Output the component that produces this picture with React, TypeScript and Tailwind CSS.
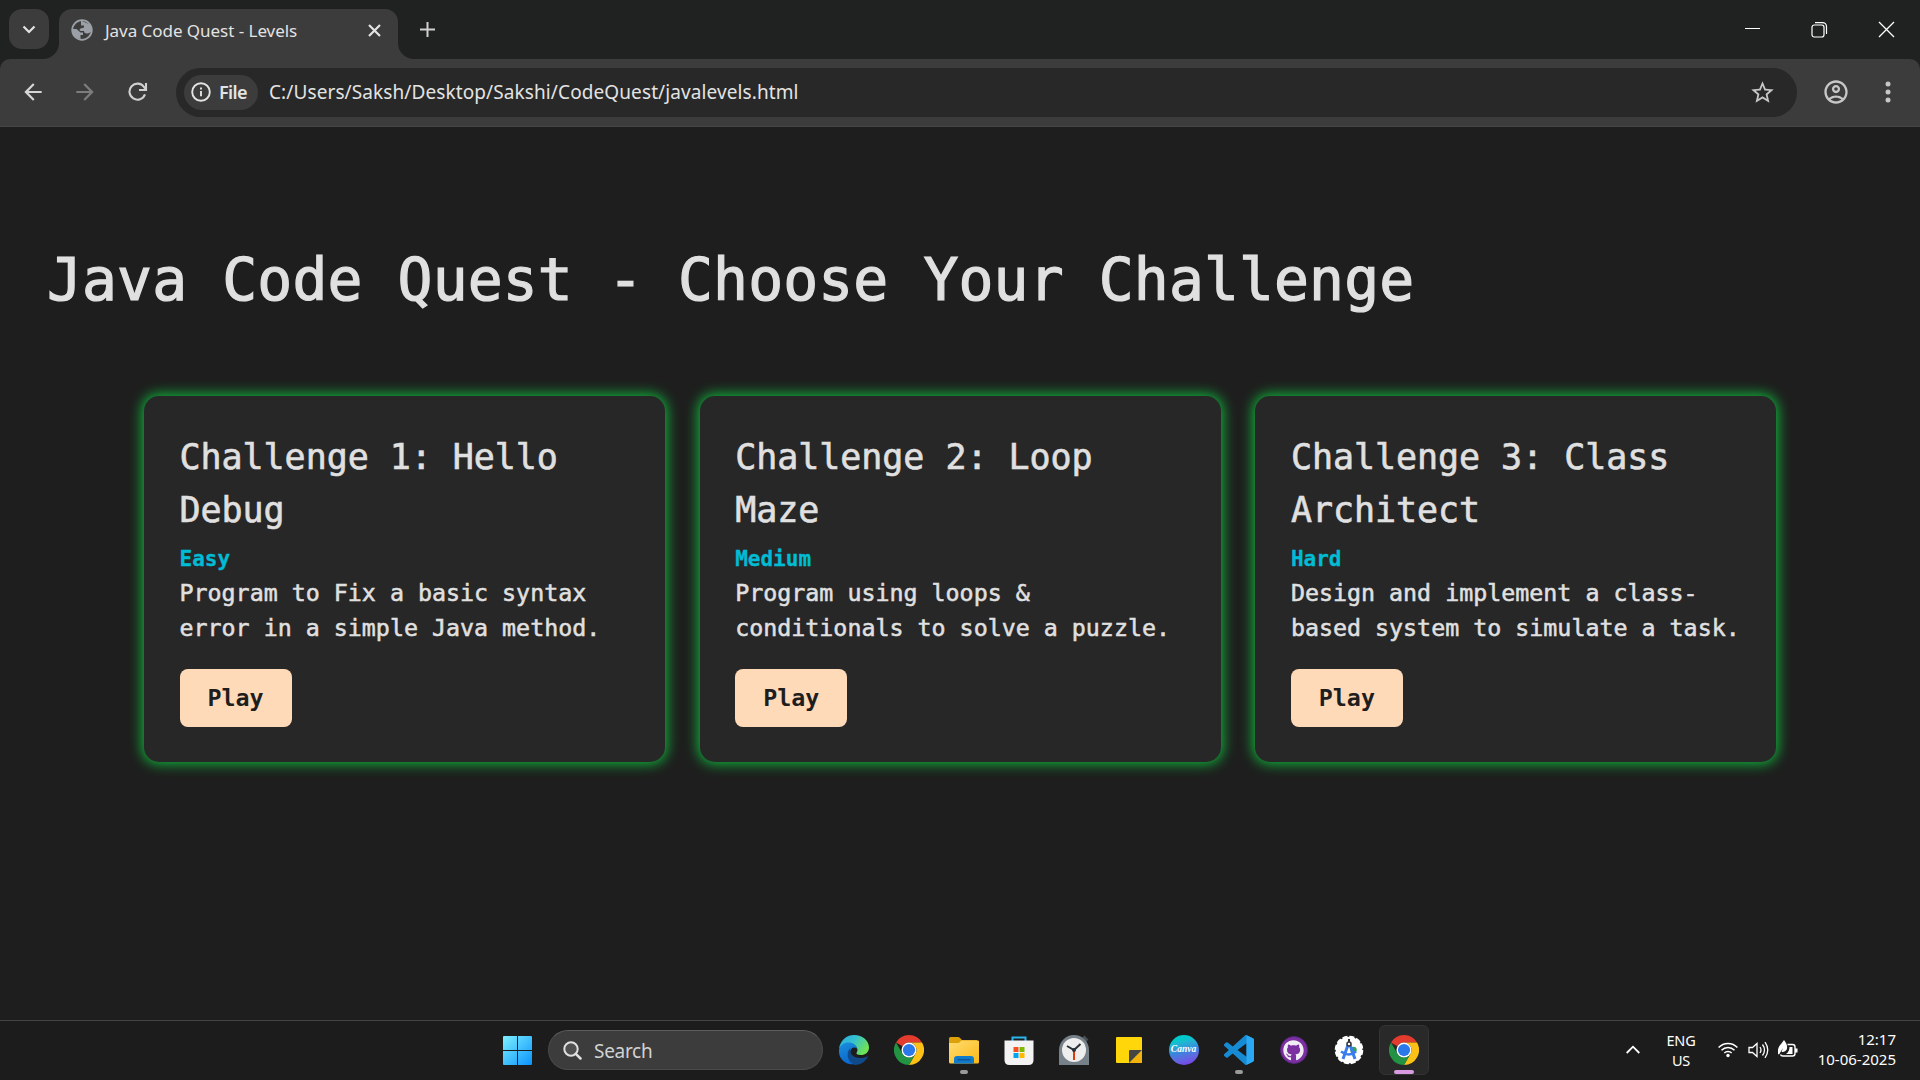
import React from "react";
import { MdArrowBack, MdArrowForward, MdPublic, MdStarOutline, MdOutlineAccountCircle } from "react-icons/md";
import { FaGithub } from "react-icons/fa";

const challenges = [
  { title: "Challenge 1: Hello Debug", level: "Easy", text: "Program to Fix a basic syntax error in a simple Java method." },
  { title: "Challenge 2: Loop Maze", level: "Medium", text: "Program using loops & conditionals to solve a puzzle." },
  { title: "Challenge 3: Class Architect", level: "Hard", text: "Design and implement a class-based system to simulate a task." },
];

function TabStrip() {
  return (
    <div className="flex h-[59px] bg-[#202221] pl-[9px]">
      <button className="mt-[9px] flex h-10 w-10 items-center justify-center rounded-[13px] bg-[#3c3c3c]">
        <svg width="14" height="14" viewBox="0 0 14 14" fill="none" stroke="#e3e3e3" strokeWidth="2.2"><path d="M1.5 4.5 7 10l5.5-5.5" /></svg>
      </button>
      <div className="relative mt-[9px] ml-[10px] flex h-[50px] w-[339px] items-center rounded-t-[13px] bg-[#3c3c3c] pb-2 pl-[11px]">
        <svg className="absolute bottom-0 -left-[16px]" width="16" height="16" viewBox="0 0 16 16" fill="#3c3c3c"><path d="M16 0v16H0A16 16 0 0 0 16 0Z" /></svg>
        <svg className="absolute bottom-0 -right-[16px]" width="16" height="16" viewBox="0 0 16 16" fill="#3c3c3c"><path d="M0 0v16h16A16 16 0 0 1 0 0Z" /></svg>
        <svg width="24" height="24" viewBox="0 0 24 24"><circle cx="12" cy="12" r="9.8" fill="none" stroke="#9aa0a6" strokeWidth="1.8" /><path fill="#9aa0a6" d="M11 2.500 21 7v7l-3 1.500c-3 .5-4-1-4-2.500h-3c-1.500 0-2-1.500-.5-2.500l3.500-1V7.500h-3ZM2.500 11h4l4 3.500h2.500v2.500h-2.500V21C5 20 2 16 2.500 11Z" /></svg>
        <span className="mt-px ml-[11px] flex-1 whitespace-nowrap text-[17px] tracking-[-0.04px] text-[#e3e3e3]">Java Code Quest - Levels</span>
        <svg className="mr-[17px]" width="13" height="13" viewBox="0 0 13 13" stroke="#e3e3e3" strokeWidth="2.2"><path d="m1 1 11 11M12 1 1 12" /></svg>
      </div>
      <svg className="mt-[22px] ml-[22px]" width="15" height="15" viewBox="0 0 15 15" stroke="#d0d0d0" strokeWidth="2"><path d="M7.5 0v15M0 7.5h15" /></svg>
      <div className="mt-[21px] ml-auto flex gap-[50px] pr-[25px]">
        <svg width="16" height="17" viewBox="0 0 16 17" stroke="#fff" strokeWidth="1"><path d="M0 7.5h15" /></svg>
        <svg width="17" height="17" viewBox="0 0 17 17" fill="none" stroke="#fff" strokeWidth="1.2"><rect x="1" y="4" width="12" height="12" rx="2.2" /><path d="M4 1.6h7.5a4 4 0 0 1 4 4V13" /></svg>
        <svg width="17" height="17" viewBox="0 0 17 17" stroke="#fff" strokeWidth="1.3"><path d="m1 1 15 15M16 1 1 16" /></svg>
      </div>
    </div>
  );
}

function Toolbar() {
  return (
    <div className="bg-[#202221]">
      <div className="flex h-[68px] items-center rounded-t-[10px] border-b border-[#464646] bg-[#3c3c3c] pb-px pl-[20px]">
        <MdArrowBack size={26} color="#d6d6d6" />
        <MdArrowForward className="ml-[26px]" size={26} color="#7d7d7d" />
        <svg className="ml-[30px]" width="20" height="20" viewBox="0 0 20 20" fill="none" stroke="#d0d0d0" strokeWidth="2.1">
          <path d="M17 12.4A8 8 0 1 1 16 5l2 2.3" /><path d="M18 1v7h-7" />
        </svg>
        <div className="ml-[28px] flex h-[49px] w-[1621px] items-center rounded-full bg-[#282828] pl-2">
          <div className="flex h-[35px] w-[74px] items-center rounded-full bg-[#3c3c3c] pl-[7px]">
            <svg width="20" height="20" viewBox="0 0 20 20" fill="none" stroke="#e3e3e3" strokeWidth="1.9"><circle cx="10" cy="10" r="8.8" /><path d="M10 9v5.3M10 5.4v2" /></svg>
            <span className="ml-2 text-[18px] leading-none font-semibold tracking-[-0.6px] text-[#e3e3e3]">File</span>
          </div>
          <span className="mt-px ml-[11px] flex-1 whitespace-nowrap text-[19px] tracking-[0.1px] text-[#e3e3e3]">C:/Users/Saksh/Desktop/Sakshi/CodeQuest/javalevels.html</span>
          <MdStarOutline className="mr-[21px]" size={27} color="#c7c7c7" />
        </div>
        <MdOutlineAccountCircle className="ml-[25px]" size={28} color="#c7c7c7" />
        <svg className="ml-[35px]" width="6" height="22" viewBox="0 0 6 22" fill="#c7c7c7"><circle cx="3" cy="3" r="2.5" /><circle cx="3" cy="11" r="2.5" /><circle cx="3" cy="19" r="2.5" /></svg>
      </div>
    </div>
  );
}

function Challenge({ title, level, text }: { title: string; level: string; text: string }) {
  return (
    <article className="flex h-[366px] w-[521px] flex-col items-start rounded-[15px] bg-[#272727] px-[35.5px] pt-[35px] shadow-[0_0_13px_2px_#10b93c]">
      <h2 className="text-[35px] leading-[53px] tracking-[-0.05px] [-webkit-text-stroke:0.6px_#e0e0e0]">{title}</h2>
      <p className="mt-[6px] text-[21px] leading-8 font-bold text-[#00bcd4] [-webkit-text-stroke:0.3px_#00bcd4]">{level}</p>
      <p className="w-[452px] text-[23.3px] leading-[35px] [-webkit-text-stroke:0.5px_#e0e0e0]">{text}</p>
      <button className="mt-6 flex h-[58px] w-28 items-center justify-center rounded-lg bg-[#ffdab9] text-[23.3px] font-bold text-[#1e1e1e]">Play</button>
    </article>
  );
}

function Chrome() {
  return (
    <svg width="30" height="30" viewBox="0 0 48 48">
      <path fill="#e33b2e" d="M24 0a24 24 0 0 1 20.8 12H24a12 12 0 0 0-10.4 6L3.2 12A24 24 0 0 1 24 0Z" />
      <path fill="#fbc116" d="M44.8 12A24 24 0 0 1 24 48l10.4-18A12 12 0 0 0 34.4 18 12 12 0 0 0 24 12Z" />
      <path fill="#229342" d="M3.2 12 13.6 30A12 12 0 0 0 34.4 30L24 48A24 24 0 0 1 3.2 12Z" />
      <circle cx="24" cy="24" r="12" fill="#fff" /><circle cx="24" cy="24" r="9.8" fill="#2b78ea" />
    </svg>
  );
}

function Edge() {
  return (
    <svg width="30" height="30" viewBox="0 0 30 30">
      <defs>
        <linearGradient id="edgeTop" x1="0" y1="0" x2="1" y2=".5"><stop stopColor="#2ba9e0" /><stop offset=".5" stopColor="#35c1d0" /><stop offset="1" stopColor="#6fe255" /></linearGradient>
        <linearGradient id="edgeLeft" x1="0" y1="0" x2=".4" y2="1"><stop stopColor="#1b8fdd" /><stop offset="1" stopColor="#0b66cc" /></linearGradient>
      </defs>
      <path fill="url(#edgeTop)" d="M0 14C1 6 7 0 15 0c9 0 15 6 15 12.500 0 5-4 7.500-8 7.500-3 0-5-1-4.500-2.300 1.500-1.700 1.500-5-1.500-7C11 7 3 9 0 14Z" />
      <path fill="url(#edgeLeft)" d="M0 15C1 10 5 7.500 9.500 7.500c4.500 0 8 2.500 8.500 6-4-3-8 1-6.500 6 1.500 5 6 8 10.500 7.500C13 33-1 27 0 15Z" />
      <path fill="#114a8b" d="M11.500 13c-2 7 6 13 16.500 8.500.6-.2 1 .2.700.8-3 5-7.500 7.700-12.700 7.700C8 27 6.500 17 11.500 13Z" />
    </svg>
  );
}

function Folder() {
  return (
    <svg width="30" height="30" viewBox="0 0 30 30">
      <defs><linearGradient id="folder" x1="0" y1="0" x2="1" y2="1"><stop stopColor="#ffdc72" /><stop offset="1" stopColor="#fbb917" /></linearGradient></defs>
      <path fill="#dca008" d="M0 3.500Q0 2 1.500 2H9q1 0 2 1l2 2H28v10H0Z" />
      <path fill="url(#folder)" d="M0 8h9q1 0 2-1l1.500-1.500H29q1 0 1 1V27q0 1.500-1.500 1.500h-27Q0 28.500 0 27Z" />
      <path fill="#117bcb" d="M5 28.500V24q0-3 3-3h14q3 0 3 3v4.500Z" /><path stroke="#0a4f91" strokeWidth="1.200" d="M8.500 24.800h13" />
    </svg>
  );
}

function Store() {
  return (
    <svg width="30" height="30" viewBox="0 0 30 30">
      <path fill="none" stroke="#28b5ee" strokeWidth="2" d="M8.500 7V2.500h13V7" />
      <path fill="#f3f3f3" d="M.5 5.500h29V25q0 5-5 5h-19q-5 0-5-5Z" />
      <path fill="#f25022" d="M9.500 12h5v5h-5z" /><path fill="#7fba00" d="M15.500 12h5v5h-5z" /><path fill="#00a4ef" d="M9.500 18h5v5h-5z" /><path fill="#ffb900" d="M15.500 18h5v5h-5z" />
    </svg>
  );
}

function Clock() {
  return (
    <svg width="30" height="30" viewBox="0 0 30 30">
      <path stroke="#4a4f54" strokeWidth="4" d="m24 2 4 4" />
      <path fill="#77818a" d="M0 15a15 15 0 0 1 30 0v15H0Z" /><circle cx="15" cy="15" r="12" fill="#eeeeee" />
      <path stroke="#e03c0a" strokeWidth="2" d="M15 15v10" /><path stroke="#293238" strokeWidth="2" fill="none" d="m8 11 7 4 6.500-6" /><circle cx="15" cy="15" r="2" fill="#293238" />
    </svg>
  );
}

function Notes() {
  return (
    <svg width="30" height="30" viewBox="0 0 30 30">
      <path fill="#ffd60a" d="M2 3q0-1 1-1h24q1 0 1 1v25H3q-1 0-1-1Z" /><path fill="#f4b20c" d="M15 28 28 15v13Z" /><path fill="#454545" d="M15 28V16q0-1 1-1h12Z" />
    </svg>
  );
}

function Canva() {
  return (
    <div className="flex h-[30px] w-[30px] items-center justify-center rounded-full bg-linear-165 from-[#00c9cc] from-20% via-[#3b82dd] via-55% to-[#7d2ae8]">
      <span className="font-['Liberation_Serif',serif] text-[9.500px] leading-none font-bold text-white italic">Canva</span>
    </div>
  );
}

function Code() {
  return (
    <svg width="30" height="30" viewBox="0 0 24 24">
      <path fill="#168bd4" d="M23.150 2.587L18.210.210a1.494 1.494 0 0 0-1.705.290l-9.460 8.630-4.120-3.128a.999.999 0 0 0-1.276.057L.327 7.261A1 1 0 0 0 .326 8.740L3.899 12 .326 15.260a1 1 0 0 0 .001 1.479L1.650 17.940a.999.999 0 0 0 1.276.057l4.120-3.128 9.460 8.630a1.492 1.492 0 0 0 1.704.290l4.942-2.377A1.500 1.500 0 0 0 24 20.060V3.939a1.500 1.500 0 0 0-.850-1.352zm-5.146 14.861L10.826 12l7.178-5.448v10.896z" />
      <path fill="#2ba8f2" d="M18 .15 23.150 2.587A1.500 1.500 0 0 1 24 3.940V20.060a1.500 1.500 0 0 1-.850 1.350L18 23.850Z" />
    </svg>
  );
}

function GitHub() {
  return (
    <div className="flex h-7 w-7 items-center justify-center rounded-full border border-[#54257a] bg-[#7b2fa0]"><FaGithub size={21} color="#f0eef3" /></div>
  );
}

function Studio() {
  return (
    <svg width="30" height="30" viewBox="0 0 30 30">
      <circle cx="15" cy="15" r="13.300" fill="#fff" /><circle cx="15" cy="15" r="13.300" fill="none" stroke="#fff" strokeWidth="2" strokeDasharray="5 1.960" />
      <circle cx="19.500" cy="15" r="3.200" fill="#2ea35a" />
      <path fill="none" stroke="#3b7ded" strokeWidth="3" d="m14 10-5 14M16 10l5 14" /><path fill="none" stroke="#3b7ded" strokeWidth="2.500" d="M7 16.500q8 6 15 0" />
      <path stroke="#333" strokeWidth="2" d="M15 4v3" /><circle cx="15" cy="9" r="2" fill="#fff" stroke="#333" strokeWidth="1.500" />
    </svg>
  );
}

const apps = [
  { Icon: Edge, open: false }, { Icon: Chrome, open: false }, { Icon: Folder, open: true }, { Icon: Store, open: false },
  { Icon: Clock, open: false }, { Icon: Notes, open: false }, { Icon: Canva, open: false }, { Icon: Code, open: true },
  { Icon: GitHub, open: false }, { Icon: Studio, open: false },
];

function Taskbar() {
  return (
    <footer className="flex h-[60px] border-t border-[#444444] bg-[#1c1c1c]">
      <svg className="mt-[15px] ml-[503px]" width="29" height="29" viewBox="0 0 29 29">
        <defs><linearGradient id="win" x1="0" y1="0" x2="29" y2="29" gradientUnits="userSpaceOnUse"><stop stopColor="#7df0ff" /><stop offset="1" stopColor="#0a93fb" /></linearGradient></defs>
        <path fill="url(#win)" d="M1 0h13v14H0V1q0-1 1-1ZM15 0h13q1 0 1 1v13H15ZM0 15h14v14H1q-1 0-1-1ZM15 15h14v13q0 1-1 1H15Z" />
      </svg>
      <div className="mt-[9px] ml-4 flex h-10 w-[275px] items-center rounded-full border border-[#4a4a4a] border-t-[#5c5c5c] bg-[#3c3c3c] pl-[14px]">
        <svg width="19" height="19" viewBox="0 0 19 19" fill="none" stroke="#e0e0e0"><circle cx="8" cy="8" r="6.700" fill="#505050" strokeWidth="2" /><path d="m12.800 12.800 4.700 4.700" strokeWidth="2.500" strokeLinecap="round" /></svg>
        <span className="mt-[3px] ml-3 text-[19px] leading-none tracking-[-0.3px] text-[#d2d2d2]">Search</span>
      </div>
      <div className="ml-[3px] flex">
        {apps.map(({ Icon, open }, i) => (
          <div key={i} className="flex w-[55px] flex-col items-center pt-[14px]">
            <div className="flex h-[30px] items-center"><Icon /></div>
            {open && <div className="mt-[5px] h-1 w-2 rounded-full bg-[#9a9a9a]" />}
          </div>
        ))}
        <div className="mt-1 ml-[3px] flex h-[50px] w-[50px] flex-col items-center rounded-md border border-[#333333] bg-[#292929] pt-[9px]">
          <Chrome />
          <div className="mt-[5px] h-1 w-5 shrink-0 rounded-full bg-[#d99be0]" />
        </div>
      </div>
      <div className="ml-auto flex items-start pr-6 text-[15px] leading-5 text-white">
        <svg className="mt-[24px]" width="14" height="9" viewBox="0 0 14 9" fill="none" stroke="#fff" strokeWidth="1.800"><path d="m.7 8 6.300-6.300L13.300 8" /></svg>
        <div className="mt-[9px] ml-[26px] w-[30px] text-center text-[14.500px] tracking-[-0.2px]">ENG<br />US</div>
        <svg className="mt-[20px] ml-[22px]" width="20" height="17" viewBox="0 0 20 17" fill="none" stroke="#fff" strokeWidth="1.500">
          <path d="M.6 6.500a13 13 0 0 1 18.800 0M3.500 9.300a9 9 0 0 1 13 0M6.300 12a5.300 5.300 0 0 1 7.400 0" /><circle cx="10" cy="14.500" r="1.700" fill="#fff" stroke="none" />
        </svg>
        <svg className="mt-[20px] ml-[10px]" width="21" height="18" viewBox="0 0 21 18" fill="none" stroke="#fff" strokeWidth="1.300">
          <path d="M1 6.500h3.500L9 2.500v13l-4.500-4H1ZM12 6q2 3 0 6M14.500 3.500q4 5.500 0 11M17 1.200q5.500 7.800 0 15.600" />
        </svg>
        <svg className="mt-[19px] ml-[9px]" width="20" height="18" viewBox="0 0 20 18" fill="none" stroke="#fff" strokeWidth="1.400">
          <path d="M9.500 4.500h5q2.500 0 2.500 2.500v6.500q0 2.500-2.500 2.500H5q-2 0-2.500-1.500" /><path fill="#fff" stroke="none" d="M17 8.500h2.500v4H17ZM11.500 7h3v7H8q3.500-2.500 3.500-7Z" />
          <path fill="#fff" stroke="none" d="M0 14C-1 6 3 5 6 0c5 6 4 12-2.500 12L5 8l-4 6.500Z" />
        </svg>
        <div className="mt-[8px] ml-[18px] w-[80px] text-right whitespace-nowrap">12:17<br />10-06-2025</div>
      </div>
    </footer>
  );
}

export default function App() {
  return (
    <div className="flex h-[1080px] w-[1920px] flex-col overflow-hidden bg-[#1e1e1e] font-['Noto_Sans',sans-serif]">
      <TabStrip />
      <Toolbar />
      <main className="flex-1 pt-[109px] font-['DejaVu_Sans_Mono',monospace] text-[#e0e0e0]">
        <h1 className="pl-[47px] text-[58px] leading-[88px] tracking-[0.14px] whitespace-nowrap [-webkit-text-stroke:1.2px_#e0e0e0]">Java Code Quest - Choose Your Challenge</h1>
        <section className="mt-[72px] ml-36 flex gap-[34.7px]">
          {challenges.map((c) => <Challenge key={c.level} {...c} />)}
        </section>
      </main>
      <Taskbar />
    </div>
  );
}
